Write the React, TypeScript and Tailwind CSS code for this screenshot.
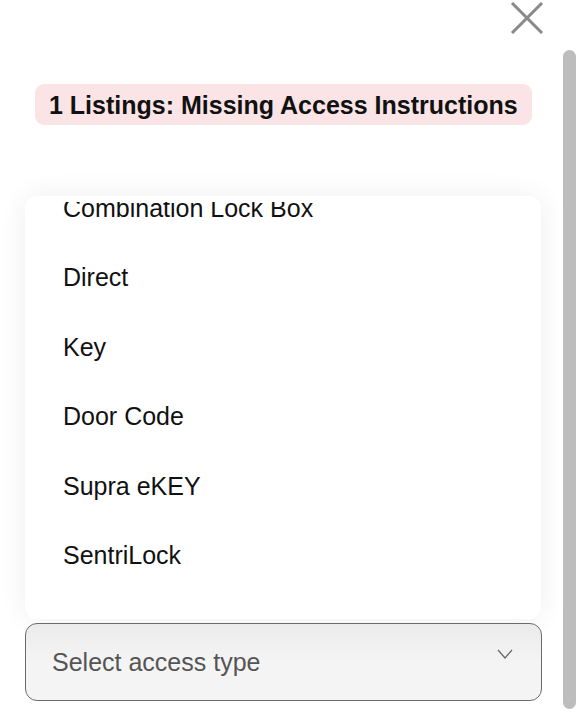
import { useState } from 'react';

const accessTypes = ['Combination Lock Box', 'Direct', 'Key', 'Door Code', 'Supra eKEY', 'SentriLock'];

export default function App() {
  const [value, setValue] = useState<string | null>(null);

  return (
    <div className="relative h-[720px] w-[583px] overflow-hidden bg-white font-['Liberation_Sans',Arial,sans-serif] text-[#111]">
      {/* Close */}
      <div className="flex justify-end pr-[39px] pt-[2px]">
        <button className="h-[32px] w-[34px]" aria-label="Close">
          <svg viewBox="0 0 34 32" className="h-[32px] w-[34px]" fill="none">
            <path d="M2 1 L32 31 M32 1 L2 31" stroke="#8a8a8a" strokeWidth="3" />
          </svg>
        </button>
      </div>

      {/* Warning badge */}
      <div className="mt-[50px] pl-[35px]">
        <div className="inline-block rounded-[9px] bg-[#fbe4e5] px-[14px] py-[5.5px] text-[25px] font-bold leading-[30px]">
          1 Listings: Missing Access Instructions
        </div>
      </div>

      {/* Dropdown panel */}
      <div className="mt-[71px] ml-[25px] w-[516px]">
        <div className="rounded-[12px] bg-white py-[6px] shadow-[0_0_28px_rgba(0,0,0,0.07)]">
          <div className="h-[411px] overflow-hidden">
            <ul className="-mt-[29px]">
              {accessTypes.map((t) => (
                <li
                  key={t}
                  onClick={() => setValue(t)}
                  className="flex h-[69.5px] cursor-pointer items-center pl-[38px] text-[25px] leading-[30px]"
                >
                  {t}
                </li>
              ))}
            </ul>
          </div>
        </div>

        {/* Select trigger */}
        <button className="mt-[4px] flex h-[78px] w-[517px] items-center justify-between rounded-[12px] border border-[#6b6b6b] bg-gradient-to-b from-[#ebebeb] via-[#f4f4f4] to-[#f4f4f4] pl-[26px] pr-[28px] text-left">
          <span className="text-[25px] leading-[30px] text-[#555]">{value ?? 'Select access type'}</span>
          <svg viewBox="0 0 16 10" className="-mt-[16px] h-[10px] w-[16px]" fill="none">
            <path d="M1 1 L8 9 L15 1" stroke="#666" strokeWidth="1.2" />
          </svg>
        </button>
      </div>

      {/* Scrollbar thumb */}
      <div className="absolute top-[50px] left-[563px] h-[659px] w-[13px] rounded-full bg-[#bdbdbd]" />
    </div>
  );
}
